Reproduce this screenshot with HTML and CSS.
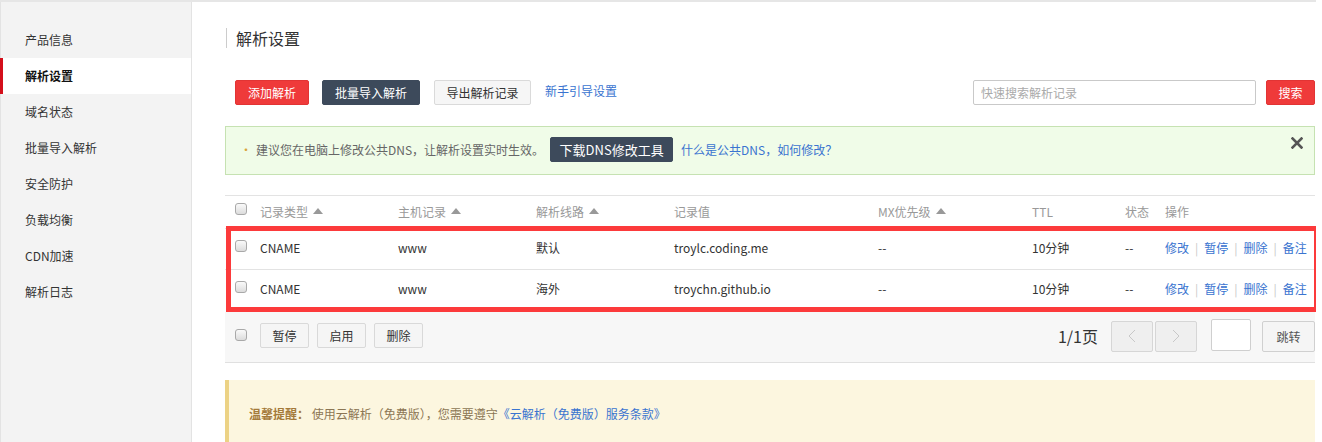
FILE: index.html
```html
<!DOCTYPE html>
<html lang="zh-CN">
<head>
<meta charset="utf-8">
<title>解析设置</title>
<link rel="stylesheet" href="styles.css">
</head>
<body>
<div class="page">
  <aside class="sidebar">
    <a class="nav-item">产品信息</a>
    <a class="nav-item active">解析设置</a>
    <a class="nav-item">域名状态</a>
    <a class="nav-item">批量导入解析</a>
    <a class="nav-item">安全防护</a>
    <a class="nav-item">负载均衡</a>
    <a class="nav-item">CDN加速</a>
    <a class="nav-item">解析日志</a>
  </aside>
  <main class="main">
    <h1 class="title">解析设置</h1>
    <div class="toolbar">
      <div class="tb-left">
        <button class="btn btn-red">添加解析</button>
        <button class="btn btn-dark">批量导入解析</button>
        <button class="btn btn-light">导出解析记录</button>
        <a class="link">新手引导设置</a>
      </div>
      <div class="tb-right">
        <input class="search" type="text" placeholder="快速搜索解析记录">
        <button class="btn btn-red btn-search">搜索</button>
      </div>
    </div>
    <div class="notice">
      <span class="dot">•</span>
      <span class="notice-text">建议您在电脑上修改公共DNS，让解析设置实时生效。</span>
      <button class="btn btn-dark btn-dl">下载DNS修改工具</button>
      <a class="link">什么是公共DNS，如何修改？</a>
      <span class="close"><svg width="12" height="12" viewBox="0 0 12 12"><path d="M1.5 1.5L10.5 10.5M10.5 1.5L1.5 10.5" stroke="#555" stroke-width="2.6" stroke-linecap="square"/></svg></span>
    </div>
    <div class="table-wrap">
      <div class="row head">
        <span class="cb"></span>
        <span>记录类型<i class="sort"></i></span>
        <span>主机记录<i class="sort"></i></span>
        <span>解析线路<i class="sort"></i></span>
        <span>记录值</span>
        <span>MX优先级<i class="sort"></i></span>
        <span>TTL</span>
        <span>状态</span>
        <span>操作</span>
      </div>
      <div class="row">
        <span class="cb"></span>
        <span>CNAME</span>
        <span>www</span>
        <span>默认</span>
        <span>troylc.coding.me</span>
        <span>--</span>
        <span>10分钟</span>
        <span>--</span>
        <span class="ops"><a>修改</a><b>|</b><a>暂停</a><b>|</b><a>删除</a><b>|</b><a>备注</a></span>
      </div>
      <div class="row">
        <span class="cb"></span>
        <span>CNAME</span>
        <span>www</span>
        <span>海外</span>
        <span>troychn.github.io</span>
        <span>--</span>
        <span>10分钟</span>
        <span>--</span>
        <span class="ops"><a>修改</a><b>|</b><a>暂停</a><b>|</b><a>删除</a><b>|</b><a>备注</a></span>
      </div>
      <div class="highlight"></div>
    </div>
    <div class="table-foot">
      <div class="foot-left">
        <span class="cb"></span>
        <button class="btn btn-light btn-sm">暂停</button>
        <button class="btn btn-light btn-sm">启用</button>
        <button class="btn btn-light btn-sm">删除</button>
      </div>
      <div class="foot-right">
        <span class="pages">1/1页</span>
        <span class="pager">
          <button class="pg"><svg width="8" height="14" viewBox="0 0 8 14"><path d="M7 1L1 7L7 13" fill="none" stroke="#c8c8c8" stroke-width="1"/></svg></button>
          <button class="pg"><svg width="8" height="14" viewBox="0 0 8 14"><path d="M1 1L7 7L1 13" fill="none" stroke="#c8c8c8" stroke-width="1"/></svg></button>
        </span>
        <input class="jump-input" type="text">
        <button class="btn jump">跳转</button>
      </div>
    </div>
    <div class="tip">
      <strong>温馨提醒：</strong> 使用云解析（免费版），您需要遵守<a class="link">《云解析（免费版）服务条款》</a>
    </div>
  </main>
</div>
</body>
</html>
```

FILE: styles.css
```css
* { box-sizing: border-box; }
html, body { margin: 0; padding: 0; background: #fff; }
body {
  font-family: "Noto Sans CJK SC", "Noto Sans", sans-serif;
  font-size: 12px;
  color: #333;
}
button, input { font-family: inherit; font-size: 12px; }

.page {
  display: flex;
  width: 1316px;
  height: 442px;
  border-top: 2px solid #e6e6e6;
  overflow: hidden;
}

.sidebar {
  width: 192px;
  flex: none;
  background: #f3f3f3;
  border-left: 1px solid #e3e3e3;
  border-right: 1px solid #e3e3e3;
  padding-top: 20px;
  display: flex;
  flex-direction: column;
}
.sidebar > * { flex-shrink: 0; }
.nav-item {
  display: block;
  height: 36px;
  line-height: 36px;
  padding-left: 24px;
  color: #333;
  font-size: 12px;
}
.nav-item.active {
  background: #fff;
  border-left: 3px solid #d40f1b;
  font-weight: bold;
  color: #111;
  margin-left: -1px;
  padding-left: 22px;
}

.main {
  flex: 1;
  min-width: 0;
  padding: 0 1px 0 33px;
  display: flex;
  flex-direction: column;
}
.main > * { flex-shrink: 0; }

.title {
  margin: 26px 0 0 1px;
  height: 20px;
  line-height: 20px;
  font-size: 16px;
  font-weight: normal;
  color: #333;
  border-left: 1px solid #ccc;
  padding-left: 9px;
}

.toolbar {
  margin-top: 32px;
  display: flex;
  justify-content: space-between;
  align-items: center;
  padding-left: 10px;
  height: 25px;
}
.tb-left, .tb-right { display: flex; align-items: center; }
.btn {
  height: 25px;
  line-height: 23px;
  padding: 0;
  border: 1px solid transparent;
  border-radius: 2px;
  cursor: pointer;
  text-align: center;
}
.btn-red { background: #ef3a3a; border-color: #e23434; color: #fff; width: 74px; }
.btn-dark { background: #3d4a5b; border-color: #3d4a5b; color: #fff; width: 98px; margin-left: 13px; }
.btn-light { background: #f6f6f6; border-color: #dadada; color: #333; width: 97px; margin-left: 14px; }
.link { color: #3a74d0; cursor: pointer; }
.tb-left .link { margin-left: 14px; line-height: 20px; margin-top: -3px; }
.search {
  width: 283px;
  height: 25px;
  border: 1px solid #c9c9c9;
  border-radius: 2px;
  padding: 0 7px;
  color: #333;
  outline: none;
}
.search::placeholder { color: #aaa; }
.btn-search { width: 49px; margin-left: 10px; }

.notice {
  margin-top: 21px;
  height: 49px;
  border: 1px solid #c6e2b2;
  background: #f0fce8;
  display: flex;
  align-items: center;
  padding-left: 14px;
  padding-bottom: 2px;
  position: relative;
  color: #666;
}
.dot { color: #d9a53c; font-size: 12px; width: 16px; }
.notice-text { line-height: 20px; }
.btn-dl { width: 123px; margin-left: 6px; font-size: 13px; }
.notice .link { margin-left: 8px; }
.close {
  position: absolute;
  right: 11px;
  top: 10px;
  width: 12px;
  height: 12px;
  display: flex;
}

.table-wrap {
  margin-top: 20px;
  border-top: 1px solid #e3e3e3;
  position: relative;
}
.row {
  display: grid;
  grid-template-columns: 25px 138px 138px 138px 204px 154px 93px 40px minmax(0, 1fr);
  align-items: center;
  height: 41px;
  border-top: 1px solid #e3e3e3;
  padding-left: 10px;
  padding-bottom: 3px;
  color: #333;
}
.row.head {
  height: 32px;
  border-top: none;
  padding-bottom: 2px;
  color: #999;
}
.row.head span { display: flex; align-items: center; }
.sort {
  display: inline-block;
  width: 0; height: 0;
  border-left: 5px solid transparent;
  border-right: 5px solid transparent;
  border-bottom: 6px solid #999;
  margin-left: 5px;
  margin-top: -1px;
}
.cb {
  display: inline-block;
  width: 12px;
  height: 12px;
  border: 1px solid #a9a9a9;
  border-radius: 3px;
  background: linear-gradient(#fafafa, #dcdcdc);
  margin-top: -4px;
}
.ops { display: flex; align-items: center; white-space: nowrap; }
.ops a { color: #3a74d0; }
.ops b { font-weight: normal; color: #c8c8c8; margin: 0 6px; }

.highlight {
  position: absolute;
  left: 1px;
  top: 30px;
  width: 1093px;
  height: 86px;
  border: 5px solid #fc3a3b;
  pointer-events: none;
}

.table-foot {
  margin-top: 2px;
  height: 51px;
  background: #f7f7f7;
  border-bottom: 1px solid #e0e0e0;
  display: flex;
  justify-content: space-between;
  align-items: center;
  padding-left: 10px;
  padding-bottom: 3px;
}
.foot-left { display: flex; align-items: center; }
.foot-left .cb { margin-top: -2px; }
.btn-sm { width: 49px; margin-left: 8px; background: #f5f5f5; border-color: #d9d9d9; }
.foot-left .btn-sm:first-of-type { margin-left: 13px; }
.foot-right { display: flex; align-items: center; margin-top: 1px; }
.pages { font-size: 16px; color: #333; margin-right: 13px; line-height: 20px; }
.pager { display: flex; gap: 2px; }
.pg {
  width: 42px;
  height: 31px;
  background: #efefef;
  border: 1px solid #d6d6d6;
  border-radius: 2px;
  display: flex;
  align-items: center;
  justify-content: center;
  padding: 0;
}
.jump-input {
  width: 40px;
  height: 32px;
  margin-left: 14px;
  border: 1px solid #cfcfcf;
  border-radius: 2px;
  background: #fff;
  margin-top: -2px;
}
.jump {
  width: 53px;
  height: 31px;
  line-height: 29px;
  margin-left: 11px;
  background: #f5f5f5;
  border-color: #d0d0d0;
  color: #555;
}

.tip {
  margin-top: 17px;
  height: 70px;
  background: #fcf6df;
  border-left: 4px solid #ecd285;
  padding: 24px 0 0 20px;
  line-height: 20px;
  color: #8c7654;
}
.tip strong { color: #a47a3a; }
.tip .link { color: #3a74d0; }
```
